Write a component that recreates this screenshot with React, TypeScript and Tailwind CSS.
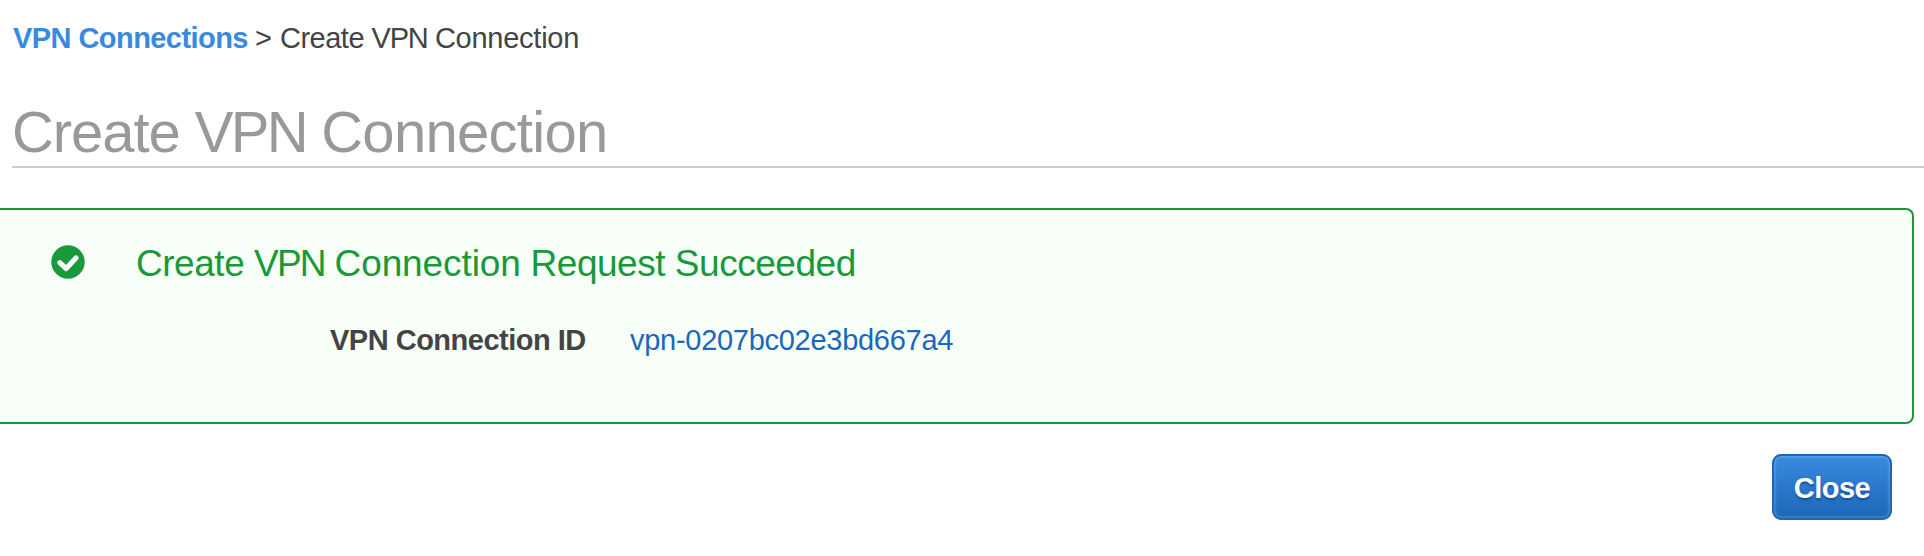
export default function App() {
  return (
    <div className="h-[556px] w-[1924px] overflow-hidden bg-white font-['Liberation_Sans',Arial,sans-serif] text-[#444]">
      <nav className="flex h-[76px] items-center pt-[2px] pl-[13px] text-[29px]">
        <a className="w-[242px] font-bold tracking-[-0.56px] whitespace-nowrap text-[#388ade]">VPN Connections</a>
        <span className="w-[25px]">&gt;</span>
        <span className="tracking-[-0.5px] whitespace-nowrap">
          Create <span className="tracking-[-1.3px]">VPN</span> <span className="tracking-[-0.25px]">Connection</span>
        </span>
      </nav>
      <h1 className="ml-3 h-[92px] border-b-2 border-[#ccc] pt-[16px] text-[58px] leading-[80px] tracking-[-1.08px] whitespace-nowrap text-[#999]">
        Create <span className="tracking-[-2.6px]">VPN</span> <span className="tracking-[-0.7px]">Connection</span>
      </h1>
      <section className="mt-10 mr-[10px] h-[216px] rounded-r-lg border-2 border-l-0 border-[#18993a] bg-[#f7fff8]">
        <div className="flex h-[108px] items-center pl-[51px] text-[#18993a]">
          <svg className="mr-[51px] mb-1 size-[34px]" viewBox="0 0 34 34" fill="none">
            <circle cx="17" cy="17" r="16.7" fill="currentColor" />
            <path d="M8.8 17.7 15.2 23.6 25 13" stroke="#f7fff8" strokeWidth="5.2" strokeLinecap="round" strokeLinejoin="round" />
          </svg>
          <h2 className="text-[37px] tracking-[-0.47px] whitespace-nowrap">
            Create <span className="tracking-[-1.8px]">VPN</span> <span className="tracking-[-0.1px]">Connection</span> Request Succeeded
          </h2>
        </div>
        <div className="flex h-[46px] items-center pl-[330px] text-[29px]">
          <b className="w-[300px] tracking-[-0.5px] whitespace-nowrap">VPN Connection ID</b>
          <a className="tracking-[-0.28px] text-[#1768be]">vpn-0207bc02e3bd667a4</a>
        </div>
      </section>
      <div className="mt-[30px] mr-8 flex justify-end">
        <button className="h-[66px] w-[120px] rounded-[9px] border-2 border-[#1a66b8] bg-linear-to-b from-[#398ade] to-[#1c67b9] pt-[3px] text-[29px] font-bold tracking-[-0.5px] text-white shadow-[inset_0_0_3px_1px_rgba(255,255,255,0.25)] text-shadow-[0_2px_2px_rgba(0,30,80,0.4)]">Close</button>
      </div>
    </div>
  );
}
